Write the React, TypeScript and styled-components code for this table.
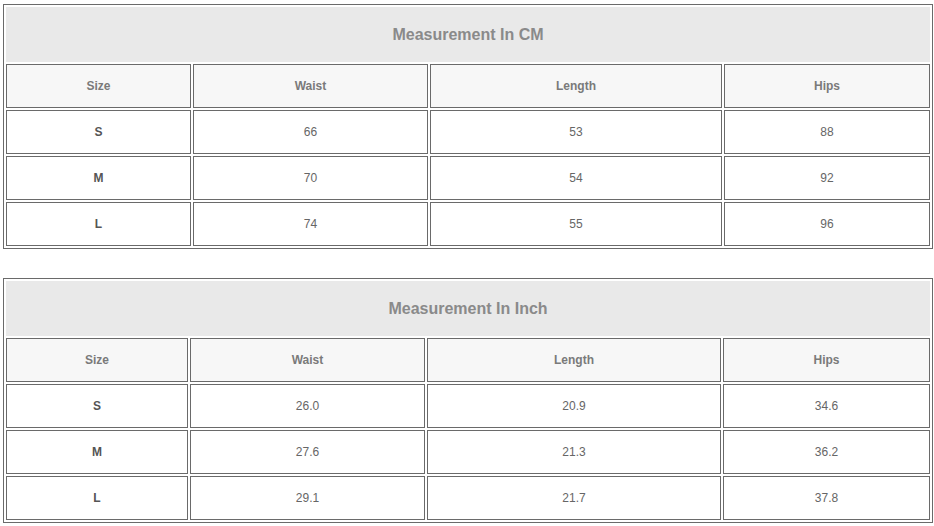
import React from "react";
import styled, { createGlobalStyle } from "styled-components";

const Global = createGlobalStyle`
  html, body { margin: 0; padding: 0; background: #ffffff; }
  body { font-family: "Liberation Sans", Arial, sans-serif; }
`;

const Page = styled.div`
  display: flex;
  flex-direction: column;
  gap: 29px;
  padding: 4px 0 0 3px;
`;

const Table = styled.table`
  width: 930px;
  table-layout: fixed;
  border-collapse: separate;
  border-spacing: 2px;
  border: 1px solid #6a6a6a;
`;

const Title = styled.th`
  height: 55px;
  padding: 0;
  background: #e9e9e9;
  border: 1px solid #e9e9e9;
  color: #8a8a8a;
  font-size: 16px;
  font-weight: bold;
  text-align: center;
  vertical-align: middle;
  box-sizing: border-box;
`;

const Cell = styled.td<{ $head?: boolean; $bold?: boolean }>`
  height: 44px;
  padding: 0;
  box-sizing: border-box;
  border: 1px solid #6a6a6a;
  background: ${(p) => (p.$head ? "#f7f7f7" : "#ffffff")};
  color: ${(p) => (p.$head ? "#7a7a7a" : p.$bold ? "#555555" : "#666666")};
  font-size: 12px;
  font-weight: ${(p) => (p.$head || p.$bold ? "bold" : "normal")};
  text-align: center;
  vertical-align: middle;
`;

type Data = {
  title: string;
  widths: number[];
  rows: [string, string, string, string][];
};

const tables: Data[] = [
  {
    title: "Measurement In CM",
    widths: [185, 235, 292, 206],
    rows: [
      ["S", "66", "53", "88"],
      ["M", "70", "54", "92"],
      ["L", "74", "55", "96"],
    ],
  },
  {
    title: "Measurement In Inch",
    widths: [182, 235, 294, 207],
    rows: [
      ["S", "26.0", "20.9", "34.6"],
      ["M", "27.6", "21.3", "36.2"],
      ["L", "29.1", "21.7", "37.8"],
    ],
  },
];

const heads = ["Size", "Waist", "Length", "Hips"];

function SizeTable({ data }: { data: Data }) {
  return (
    <Table>
      <colgroup>
        {data.widths.map((w, i) => (
          <col key={i} style={{ width: w }} />
        ))}
      </colgroup>
      <tbody>
        <tr>
          <Title colSpan={4}>{data.title}</Title>
        </tr>
        <tr>
          {heads.map((h) => (
            <Cell key={h} $head>
              {h}
            </Cell>
          ))}
        </tr>
        {data.rows.map((r) => (
          <tr key={r[0]}>
            {r.map((v, i) => (
              <Cell key={i} $bold={i === 0}>
                {v}
              </Cell>
            ))}
          </tr>
        ))}
      </tbody>
    </Table>
  );
}

export default function App() {
  return (
    <>
      <Global />
      <Page>
        {tables.map((t) => (
          <SizeTable key={t.title} data={t} />
        ))}
      </Page>
    </>
  );
}
